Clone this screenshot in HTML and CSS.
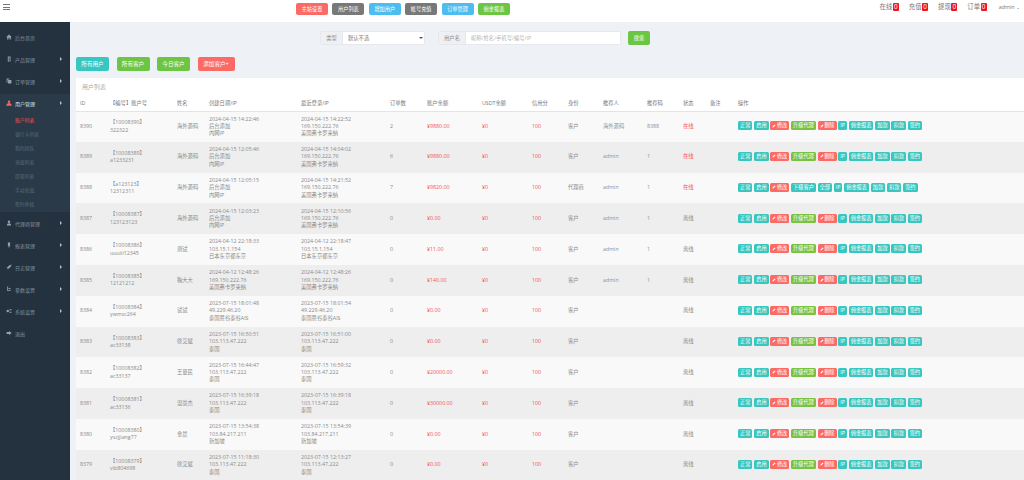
FILE: index.html
```html
<!DOCTYPE html>
<html lang="en">
<head>
    <meta charset="UTF-8">
    <meta name="viewport" content="width=device-width, initial-scale=1.0">
    <title>用户管理</title>
    <link rel="stylesheet" href="styles.css">
</head>
<body>

<svg class="defs" aria-hidden="true">
    <symbol id="pen" viewBox="0 0 10 10"><path d="M1 9l.6-2.6L6.8 1.2l2 2L3.6 8.4z" fill="currentColor"/></symbol>
    <symbol id="arrow" viewBox="0 0 2 4"><path d="M0 0l2 2-2 2z" fill="currentColor"/></symbol>
</svg>

<header class="topbar">
    <div class="burger"><span></span><span></span><span></span></div>
    <nav class="top-links">
        <a class="btn-top red">主站设置</a>
        <a class="btn-top gray">用户列表</a>
        <a class="btn-top blue">增加用户</a>
        <a class="btn-top gray">帐号充值</a>
        <a class="btn-top blue">订单管理</a>
        <a class="btn-top green">佣金报表</a>
    </nav>
    <div class="counters">
        <span class="counter">在线<b>0</b></span>
        <span class="counter">充值<b>0</b></span>
        <span class="counter">提现<b>0</b></span>
        <span class="counter">订单<b>0</b></span>
        <span class="admin">admin <i></i></span>
    </div>
</header>

<div class="layout">
    <aside class="sidebar">
        <a class="nav-item"><svg class="nav-icon" viewBox="0 0 10 10"><path d="M5 1L.5 5.2h1.4V9h2.2V6.4h1.8V9h2.2V5.2h1.4z"/></svg>后台首页</a>
        <a class="nav-item"><svg class="nav-icon" viewBox="0 0 10 10"><path d="M3 1h3.4a2 2 0 0 1 .6 3.8A2.2 2.2 0 0 1 6.6 9H3zm1.4 1.3v1.8h1.8a.9.9 0 0 0 0-1.8zm0 3v2.4h2a1.2 1.2 0 0 0 0-2.4z"/></svg>产品管理<svg class="nav-arrow"><use href="#arrow"/></svg></a>
        <a class="nav-item"><svg class="nav-icon" viewBox="0 0 10 10"><path d="M1 1h4.5v1.6H2.5v5H1zM3.4 3.4H9V9H3.4z"/></svg>订单管理<svg class="nav-arrow"><use href="#arrow"/></svg></a>
        <a class="nav-item open"><svg class="nav-icon" viewBox="0 0 10 10"><circle cx="5" cy="2.800" r="2"/><path d="M.5 9.500C.8 6.500 2.500 4.800 5 4.800s4.200 1.700 4.500 4.700z"/></svg>用户管理<svg class="nav-arrow"><use href="#arrow"/></svg></a>
        <div class="subnav">
            <a class="active">账户列表</a>
            <a>银行卡列表</a>
            <a>我的团队</a>
            <a>充值列表</a>
            <a>提现列表</a>
            <a>手动充值</a>
            <a>签约审核</a>
        </div>
        <a class="nav-item"><svg class="nav-icon" viewBox="0 0 10 10"><circle cx="5" cy="2.800" r="2"/><path d="M1.500 9c0-2.400 1.400-3.600 3.500-3.600S8.500 6.600 8.500 9z"/></svg>代理商管理<svg class="nav-arrow"><use href="#arrow"/></svg></a>
        <a class="nav-item"><svg class="nav-icon" viewBox="0 0 10 10"><path d="M3 1h4v1L6.400 5.500 7.500 7H5.500V9.500h-1V7h-2l1.100-1.500L3 2z"/></svg>报表管理<svg class="nav-arrow"><use href="#arrow"/></svg></a>
        <a class="nav-item"><svg class="nav-icon" viewBox="0 0 10 10"><path d="M9.500 1L5 2.500 3 5 1 5.500 2.500 7 3 9 4.500 7.500 7.500 5z"/></svg>日志管理<svg class="nav-arrow"><use href="#arrow"/></svg></a>
        <a class="nav-item"><svg class="nav-icon" viewBox="0 0 10 10"><path d="M2 1h1.500v6H8v1.500H2zM4.500 3.500h3V5h-3z"/></svg>参数设置<svg class="nav-arrow"><use href="#arrow"/></svg></a>
        <a class="nav-item"><svg class="nav-icon" viewBox="0 0 12 10"><circle cx="3.500" cy="5" r="2.500"/><path d="M7 1h4v1.500H7zM7 7.500h4V9H7zM6.500 4.300H11v1.400H6.500z"/></svg>系统设置<svg class="nav-arrow"><use href="#arrow"/></svg></a>
        <a class="nav-item"><svg class="nav-icon" viewBox="0 0 10 10"><path d="M1 3.500h4V1.500L9.500 5 5 8.500v-2H1z"/></svg>退出</a>
    </aside>

    <main class="content">
        <form class="filters">
            <div class="field type-field">
                <label>类型</label>
                <select><option>默认不选</option></select>
            </div>
            <div class="field name-field">
                <label>用户名</label>
                <input type="text" placeholder="昵称/姓名/手机号/编号/IP">
            </div>
            <button type="button" class="btn-search">搜索</button>
        </form>

        <div class="quick-links">
            <a class="btn-quick teal">所有用户</a>
            <a class="btn-quick green">所有客户</a>
            <a class="btn-quick green">今日客户</a>
            <a class="btn-quick red wide">添加客户+</a>
        </div>

        <section class="card">
            <h2>用户列表</h2>
            <table class="user-table">
                <colgroup>
                    <col class="c-id"><col class="c-no"><col class="c-name"><col class="c-created"><col class="c-login">
                    <col class="c-orders"><col class="c-balance"><col class="c-usdt"><col class="c-credit"><col class="c-role">
                    <col class="c-ref"><col class="c-code"><col class="c-status"><col class="c-note"><col class="c-ops">
                </colgroup>
                <thead>
                    <tr><th>ID</th><th>【编号】账户号</th><th>姓名</th><th>创建日期/IP</th><th>最近登录/IP</th><th>订单数</th><th>账户余额</th><th>USDT余额</th><th>信用分</th><th>身份</th><th>推荐人</th><th>推荐码</th><th>状态</th><th>备注</th><th>操作</th></tr>
                </thead>
                <tbody>
                    <tr>
                        <td>8390</td><td><span class="no">【10008390】</span><br>322322</td><td>海外源码</td>
                        <td>2024-04-15 14:22:46<br>后台添加<br>内网IP</td><td>2024-04-15 14:22:52<br>169.150.222.76<br>美国弗卡罗来纳</td>
                        <td>2</td><td class="money">¥9880.00</td><td class="money">¥0</td><td class="money">100</td><td>客户</td><td class="link">海外源码</td><td class="link">8388</td><td class="money">在线</td><td></td>
                        <td class="ops"><a class="tag">正常</a><a class="tag">启用</a><a class="tag red"><svg class="pen"><use href="#pen"/></svg>修改</a><a class="tag green">升级代理</a><a class="tag red"><svg class="pen"><use href="#pen"/></svg>删除</a><a class="tag">IP</a><a class="tag">佣金报表</a><a class="tag">加款</a><a class="tag">扣款</a><a class="tag">签约</a></td>
                    </tr>
                    <tr>
                        <td>8389</td><td><span class="no">【10008389】</span><br>a1233231</td><td>海外源码</td>
                        <td>2024-04-15 12:05:46<br>后台添加<br>内网IP</td><td>2024-04-15 14:04:02<br>169.150.222.76<br>美国弗卡罗来纳</td>
                        <td>6</td><td class="money">¥9880.00</td><td class="money">¥0</td><td class="money">100</td><td>客户</td><td class="link">admin</td><td class="link">1</td><td class="money">在线</td><td></td>
                        <td class="ops"><a class="tag">正常</a><a class="tag">启用</a><a class="tag red"><svg class="pen"><use href="#pen"/></svg>修改</a><a class="tag green">升级代理</a><a class="tag red"><svg class="pen"><use href="#pen"/></svg>删除</a><a class="tag">IP</a><a class="tag">佣金报表</a><a class="tag">加款</a><a class="tag">扣款</a><a class="tag">签约</a></td>
                    </tr>
                    <tr>
                        <td>8388</td><td><span class="no">【a123123】</span><br>12312311</td><td>海外源码</td>
                        <td>2024-04-15 12:05:15<br>后台添加<br>内网IP</td><td>2024-04-15 14:21:52<br>169.150.222.76<br>美国弗卡罗来纳</td>
                        <td>7</td><td class="money">¥9820.00</td><td class="money">¥0</td><td class="money">100</td><td>代理商</td><td class="link">admin</td><td class="link">1</td><td class="money">在线</td><td></td>
                        <td class="ops"><a class="tag">正常</a><a class="tag">启用</a><a class="tag red"><svg class="pen"><use href="#pen"/></svg>修改</a><a class="tag">下级客户</a><a class="tag">全部</a><a class="tag">IP</a><a class="tag">佣金报表</a><a class="tag">加款</a><a class="tag">扣款</a><a class="tag">签约</a></td>
                    </tr>
                    <tr>
                        <td>8387</td><td><span class="no">【10008387】</span><br>123123123</td><td>海外源码</td>
                        <td>2024-04-15 12:03:23<br>后台添加<br>内网IP</td><td>2024-04-15 12:10:56<br>169.150.222.76<br>美国弗卡罗来纳</td>
                        <td>0</td><td class="money">¥0.00</td><td class="money">¥0</td><td class="money">100</td><td>客户</td><td class="link">admin</td><td class="link">1</td><td>离线</td><td></td>
                        <td class="ops"><a class="tag">正常</a><a class="tag">启用</a><a class="tag red"><svg class="pen"><use href="#pen"/></svg>修改</a><a class="tag green">升级代理</a><a class="tag red"><svg class="pen"><use href="#pen"/></svg>删除</a><a class="tag">IP</a><a class="tag">佣金报表</a><a class="tag">加款</a><a class="tag">扣款</a><a class="tag">签约</a></td>
                    </tr>
                    <tr>
                        <td>8386</td><td><span class="no">【10008386】</span><br>uuuiii12345</td><td>测试</td>
                        <td>2024-04-12 22:18:33<br>103.15.1.154<br>日本东京都东京</td><td>2024-04-12 22:18:47<br>103.15.1.154<br>日本东京都东京</td>
                        <td>0</td><td class="money">¥11.00</td><td class="money">¥0</td><td class="money">100</td><td>客户</td><td class="link">admin</td><td class="link">1</td><td>离线</td><td></td>
                        <td class="ops"><a class="tag">正常</a><a class="tag">启用</a><a class="tag red"><svg class="pen"><use href="#pen"/></svg>修改</a><a class="tag green">升级代理</a><a class="tag red"><svg class="pen"><use href="#pen"/></svg>删除</a><a class="tag">IP</a><a class="tag">佣金报表</a><a class="tag">加款</a><a class="tag">扣款</a><a class="tag">签约</a></td>
                    </tr>
                    <tr>
                        <td>8385</td><td><span class="no">【10008385】</span><br>12121212</td><td>鞠大大</td>
                        <td>2024-04-12 12:48:26<br>169.150.222.76<br>美国弗卡罗来纳</td><td>2024-04-12 12:48:26<br>169.150.222.76<br>美国弗卡罗来纳</td>
                        <td>0</td><td class="money">¥140.00</td><td class="money">¥0</td><td class="money">100</td><td>客户</td><td class="link">admin</td><td class="link">1</td><td>离线</td><td></td>
                        <td class="ops"><a class="tag">正常</a><a class="tag">启用</a><a class="tag red"><svg class="pen"><use href="#pen"/></svg>修改</a><a class="tag green">升级代理</a><a class="tag red"><svg class="pen"><use href="#pen"/></svg>删除</a><a class="tag">IP</a><a class="tag">佣金报表</a><a class="tag">加款</a><a class="tag">扣款</a><a class="tag">签约</a></td>
                    </tr>
                    <tr>
                        <td>8384</td><td><span class="no">【10008384】</span><br>ywmsc264</td><td>试试</td>
                        <td>2023-07-15 18:01:48<br>49.229.46.20<br>泰国曼谷泰谷AIS</td><td>2023-07-15 18:01:54<br>49.229.46.20<br>泰国曼谷泰谷AIS</td>
                        <td>0</td><td class="money">¥0.00</td><td class="money">¥0</td><td class="money">100</td><td>客户</td><td class="link"></td><td class="link"></td><td>离线</td><td></td>
                        <td class="ops"><a class="tag">正常</a><a class="tag">启用</a><a class="tag red"><svg class="pen"><use href="#pen"/></svg>修改</a><a class="tag green">升级代理</a><a class="tag red"><svg class="pen"><use href="#pen"/></svg>删除</a><a class="tag">IP</a><a class="tag">佣金报表</a><a class="tag">加款</a><a class="tag">扣款</a><a class="tag">签约</a></td>
                    </tr>
                    <tr>
                        <td>8383</td><td><span class="no">【10008383】</span><br>ac33138</td><td>徐艾斌</td>
                        <td>2023-07-15 16:50:51<br>103.113.47.222<br>泰国</td><td>2023-07-15 16:51:00<br>103.113.47.222<br>泰国</td>
                        <td>0</td><td class="money">¥0.00</td><td class="money">¥0</td><td class="money">100</td><td>客户</td><td class="link"></td><td class="link"></td><td>离线</td><td></td>
                        <td class="ops"><a class="tag">正常</a><a class="tag">启用</a><a class="tag red"><svg class="pen"><use href="#pen"/></svg>修改</a><a class="tag green">升级代理</a><a class="tag red"><svg class="pen"><use href="#pen"/></svg>删除</a><a class="tag">IP</a><a class="tag">佣金报表</a><a class="tag">加款</a><a class="tag">扣款</a><a class="tag">签约</a></td>
                    </tr>
                    <tr>
                        <td>8382</td><td><span class="no">【10008382】</span><br>ac33137</td><td>王量民</td>
                        <td>2023-07-15 16:44:47<br>103.113.47.222<br>泰国</td><td>2023-07-15 16:59:32<br>103.113.47.222<br>泰国</td>
                        <td>0</td><td class="money">¥20000.00</td><td class="money">¥0</td><td class="money">100</td><td>客户</td><td class="link"></td><td class="link"></td><td>离线</td><td></td>
                        <td class="ops"><a class="tag">正常</a><a class="tag">启用</a><a class="tag red"><svg class="pen"><use href="#pen"/></svg>修改</a><a class="tag green">升级代理</a><a class="tag red"><svg class="pen"><use href="#pen"/></svg>删除</a><a class="tag">IP</a><a class="tag">佣金报表</a><a class="tag">加款</a><a class="tag">扣款</a><a class="tag">签约</a></td>
                    </tr>
                    <tr>
                        <td>8381</td><td><span class="no">【10008381】</span><br>ac33136</td><td>温豪杰</td>
                        <td>2023-07-15 16:39:18<br>103.113.47.222<br>泰国</td><td>2023-07-15 16:39:18<br>103.113.47.222<br>泰国</td>
                        <td>0</td><td class="money">¥30000.00</td><td class="money">¥0</td><td class="money">100</td><td>客户</td><td class="link"></td><td class="link"></td><td>离线</td><td></td>
                        <td class="ops"><a class="tag">正常</a><a class="tag">启用</a><a class="tag red"><svg class="pen"><use href="#pen"/></svg>修改</a><a class="tag green">升级代理</a><a class="tag red"><svg class="pen"><use href="#pen"/></svg>删除</a><a class="tag">IP</a><a class="tag">佣金报表</a><a class="tag">加款</a><a class="tag">扣款</a><a class="tag">签约</a></td>
                    </tr>
                    <tr>
                        <td>8380</td><td><span class="no">【10008380】</span><br>yszjjiang77</td><td>金晨</td>
                        <td>2023-07-15 13:54:38<br>103.84.217.211<br>新加坡</td><td>2023-07-15 13:54:39<br>103.84.217.211<br>新加坡</td>
                        <td>0</td><td class="money">¥0.00</td><td class="money">¥0</td><td class="money">100</td><td>客户</td><td class="link"></td><td class="link"></td><td>离线</td><td></td>
                        <td class="ops"><a class="tag">正常</a><a class="tag">启用</a><a class="tag red"><svg class="pen"><use href="#pen"/></svg>修改</a><a class="tag green">升级代理</a><a class="tag red"><svg class="pen"><use href="#pen"/></svg>删除</a><a class="tag">IP</a><a class="tag">佣金报表</a><a class="tag">加款</a><a class="tag">扣款</a><a class="tag">签约</a></td>
                    </tr>
                    <tr>
                        <td>8379</td><td><span class="no">【10008379】</span><br>vib804698</td><td>徐艾斌</td>
                        <td>2023-07-15 11:18:30<br>103.113.47.222<br>泰国</td><td>2023-07-15 12:13:27<br>103.113.47.222<br>泰国</td>
                        <td>0</td><td class="money">¥0.00</td><td class="money">¥0</td><td class="money">100</td><td>客户</td><td class="link"></td><td class="link"></td><td>离线</td><td></td>
                        <td class="ops"><a class="tag">正常</a><a class="tag">启用</a><a class="tag red"><svg class="pen"><use href="#pen"/></svg>修改</a><a class="tag green">升级代理</a><a class="tag red"><svg class="pen"><use href="#pen"/></svg>删除</a><a class="tag">IP</a><a class="tag">佣金报表</a><a class="tag">加款</a><a class="tag">扣款</a><a class="tag">签约</a></td>
                    </tr>
                </tbody>
            </table>
        </section>
    </main>
</div>

</body>
</html>
```

FILE: styles.css
```css
* {
    box-sizing: border-box;
}

html, body {
    height: 100%;
    margin: 0;
    overflow: hidden;
}

body {
    font-family: "Open Sans", "Noto Sans CJK SC", sans-serif;
    font-size: 5.3px;
    color: #8a8a8a;
    background-color: #eef1f6;
}

.defs {
    display: none;
}

/* top bar */
.topbar {
    height: 22px;
    background-color: #fff;
    display: flex;
    align-items: flex-start;
    padding: 0 5px 0 3px;
}

.burger {
    width: 7px;
    margin-top: 4px;
}

.burger span {
    display: block;
    height: 1px;
    margin-bottom: 1.500px;
    background-color: #777;
}

.top-links {
    display: flex;
    gap: 4.400px;
    margin-left: 286px;
    margin-top: 3px;
}

.btn-top {
    width: 32px;
    height: 12px;
    line-height: 12px;
    text-align: center;
    color: #fff;
    border-radius: 2px;
    font-size: 5.200px;
}

.btn-top.red { background-color: #fb6a65; }
.btn-top.gray { background-color: #787878; }
.btn-top.blue { background-color: #4dbdf0; }
.btn-top.green { background-color: #6cc644; }

.counters {
    display: flex;
    gap: 10px;
    margin-left: auto;
    margin-top: 3px;
    font-size: 6.400px;
    line-height: 8px;
    color: #777;
}

.counter b {
    display: inline-block;
    width: 6px;
    height: 8px;
    margin-left: .500px;
    line-height: 8px;
    text-align: center;
    font-weight: 400;
    color: #fff;
    background-color: #f0141e;
    border-radius: 1px;
}

.admin {
    font-size: 5.400px;
    margin-left: 2px;
}

.admin i {
    display: inline-block;
    margin-left: 1px;
    border: 1.500px solid transparent;
    border-top-color: #888;
    vertical-align: -1px;
}

.layout {
    display: flex;
    height: 458px;
}

/* sidebar */
.sidebar {
    width: 70px;
    flex-shrink: 0;
    padding-top: 4px;
    background-color: #243240;
    color: #84919d;
}

.nav-item {
    display: flex;
    align-items: center;
    height: 22px;
    padding: 0 6px;
    font-size: 5px;
}

.nav-item.open {
    height: 18px;
    margin-top: 2px;
    background-color: #2b3a48;
    color: #dfe5ea;
}

.nav-icon {
    width: 6px;
    height: 6px;
    margin-right: 3px;
    fill: #95a1ab;
    flex-shrink: 0;
}

.open .nav-icon {
    fill: #f8645f;
}

.nav-arrow {
    width: 2px;
    height: 4px;
    margin-left: auto;
    margin-right: 2px;
    color: #b4bec6;
}

.subnav {
    height: 100px;
    padding-top: 1px;
    background-color: #2b3a48;
}

.subnav a {
    display: block;
    height: 14px;
    line-height: 14px;
    padding-left: 15px;
    font-size: 4.800px;
    color: #5c6b78;
}

.subnav a.active {
    color: #f8504c;
}

/* filters */
.content {
    flex: 1;
    min-width: 0;
    padding: 9px 0 0 6px;
}

.filters {
    display: flex;
    height: 14px;
    padding-left: 244px;
}

.field {
    position: relative;
    display: flex;
    height: 14px;
    background-color: #fff;
    border: 1px solid #e6e8ec;
    border-radius: 2px;
}

.field label {
    line-height: 12px;
    text-align: center;
    background-color: #eef0f3;
    border-right: 1px solid #e6e8ec;
}

.type-field {
    width: 105px;
}

.type-field label {
    width: 22px;
}

/* small caret over the select */
.type-field::after {
    content: "";
    position: absolute;
    right: 1.500px;
    top: 5px;
    border: 2px solid transparent;
    border-top-color: #555;
    pointer-events: none;
}

.name-field {
    width: 183px;
    margin-left: 13px;
}

.name-field label {
    width: 27px;
}

.field select, .field input {
    flex: 1;
    min-width: 0;
    border: 0;
    outline: none;
    padding: 0 5px;
    appearance: none;
    background-color: #fff;
    font: inherit;
    color: #777;
}

.field input::placeholder {
    color: #b4b4b4;
}

.btn-search {
    width: 22px;
    height: 14px;
    margin-left: 7px;
    padding: 0;
    border: 0;
    border-radius: 2px;
    background-color: #6cc644;
    color: #fff;
    font: inherit;
}

.quick-links {
    display: flex;
    gap: 7.500px;
    margin-top: 12px;
}

.btn-quick {
    width: 33px;
    height: 14px;
    line-height: 14px;
    text-align: center;
    color: #fff;
    border-radius: 2px;
    font-size: 5.600px;
}

.btn-quick.wide { width: 37px; }
.btn-quick.teal { background-color: #37c6c0; }
.btn-quick.green { background-color: #6cc644; }
.btn-quick.red { background-color: #fb6a65; }

/* table card */
.card {
    margin-top: 7px;
    background-color: #fff;
}

.card h2 {
    height: 18px;
    margin: 0;
    padding: 5px 0 0 6px;
    font-size: 6px;
    font-weight: 400;
    line-height: 8px;
    color: #aaa;
}

.user-table {
    width: 948px;
    table-layout: fixed;
    border-collapse: collapse;
}

.c-id { width: 30px; }
.c-no { width: 67px; }
.c-name { width: 32px; }
.c-created { width: 92px; }
.c-login { width: 89px; }
.c-orders { width: 37px; }
.c-balance { width: 55px; }
.c-usdt { width: 50px; }
.c-credit { width: 36px; }
.c-role { width: 35px; }
.c-ref { width: 44px; }
.c-code { width: 36px; }
.c-status { width: 27px; }
.c-note { width: 28px; }
.c-ops { width: 290px; }

.user-table th {
    height: 15px;
    padding: 0 4px;
    text-align: left;
    font-weight: 400;
    color: #777;
    border-bottom: 1px solid #e4e4e4;
}

.user-table td {
    height: 30.800px;
    padding: 0 4px;
    line-height: 7.400px;
    white-space: nowrap;
    overflow: hidden;
}

.user-table tbody tr:nth-child(odd) {
    background-color: #f9f9f9;
}

.user-table tbody tr:nth-child(even) {
    background-color: #eee;
}

.money {
    color: #f4545c;
}

.link {
    color: #8493a8;
}

.ops {
    font-size: 0;
}

.tag {
    display: inline-block;
    height: 9px;
    line-height: 9px;
    margin-right: 1.800px;
    padding: 0 2px;
    font-size: 5.200px;
    color: #fff;
    background-color: #37c6c0;
    border-radius: 1.500px;
}

.tag.red { background-color: #fb6a65; }
.tag.green { background-color: #7ac143; }

.pen {
    width: 4px;
    height: 4px;
    margin-right: .500px;
    vertical-align: -.500px;
}
```
